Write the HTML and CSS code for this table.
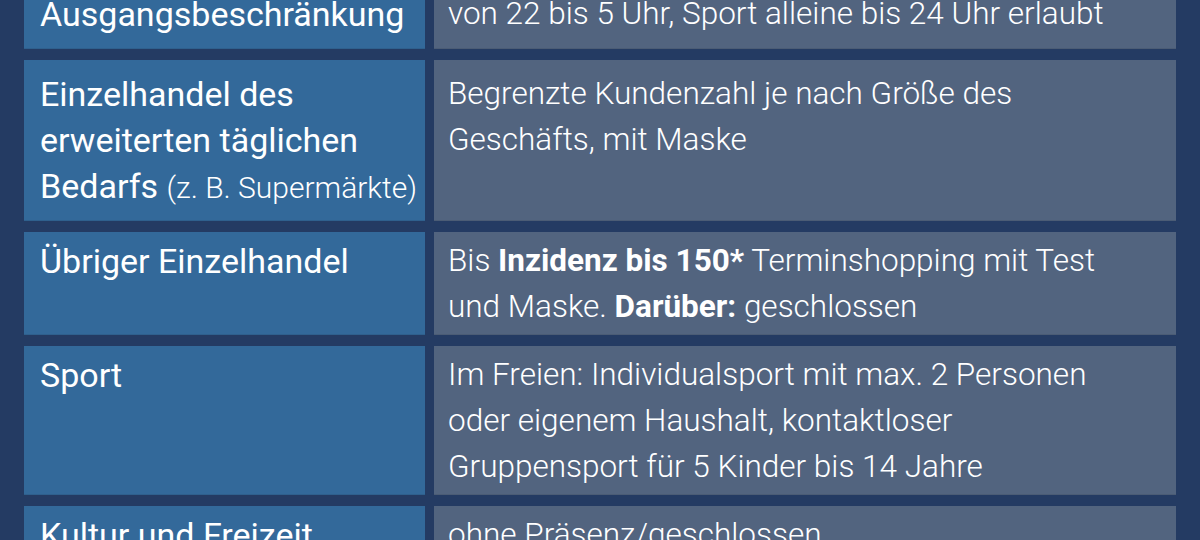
FILE: index.html
```html
<!DOCTYPE html>
<html lang="de">
<head>
    <meta charset="UTF-8">
    <meta name="viewport" content="width=device-width, initial-scale=1.0">
    <title>Regeln</title>
    <link rel="stylesheet" href="styles.css">
</head>
<body>

    <!-- Rules table -->
    <div class="rules">
        <div class="row row-first">
            <div class="cell topic">Ausgangsbeschränkung</div>
            <div class="cell rule">von 22 bis 5 Uhr, Sport alleine bis 24 Uhr erlaubt</div>
        </div>
        <div class="row row-tall">
            <div class="cell topic">Einzelhandel des<br>erweiterten täglichen<br>Bedarfs <span class="note">(z. B. Supermärkte)</span></div>
            <div class="cell rule">Begrenzte Kundenzahl je nach Größe des<br>Geschäfts, mit Maske</div>
        </div>
        <div class="row">
            <div class="cell topic">Übriger Einzelhandel</div>
            <div class="cell rule">Bis <strong>Inzidenz bis 150*</strong> Terminshopping mit Test<br>und Maske. <strong>Darüber:</strong> geschlossen</div>
        </div>
        <div class="row">
            <div class="cell topic">Sport</div>
            <div class="cell rule">Im Freien: Individualsport mit max. 2 Personen<br>oder eigenem Haushalt, kontaktloser<br>Gruppensport für 5 Kinder bis 14 Jahre</div>
        </div>
        <div class="row">
            <div class="cell topic">Kultur und Freizeit</div>
            <div class="cell rule">ohne Präsenz/geschlossen</div>
        </div>
    </div>

</body>
</html>
```

FILE: styles.css
```css
body {
    margin: 0;
    background: #243b63;
    color: #ffffff;
    font-family: Roboto, "Open Sans", sans-serif;
    height: 540px;
    overflow: hidden;
}

.rules {
    display: flex;
    flex-direction: column;
    gap: 11px;
    padding: 0 24px;
    margin-top: -15px; /* first row is cut off by the top edge */
}

.row {
    display: grid;
    grid-template-columns: 401px 1fr;
    column-gap: 9px;
}

.cell {
    padding: 6px 14px 5px 16px;
    line-height: 46px;
    white-space: nowrap;
    box-shadow: inset 0 -1px 0 rgba(0, 0, 0, 0.08);
}

.topic {
    background: #33699a;
    font-size: 34px;
    font-weight: 400;
}

.rule {
    background: #52647f;
    padding-left: 14px;
    font-size: 31.5px;
    font-weight: 300;
}

.rule strong {
    font-weight: 700;
}

.note {
    font-weight: 300;
    font-size: 30px;
    line-height: 1;
}

.row-first .cell {
    padding-bottom: 12px;
}

.row-tall .cell {
    padding-top: 11px;
    padding-bottom: 12px;
}
```
